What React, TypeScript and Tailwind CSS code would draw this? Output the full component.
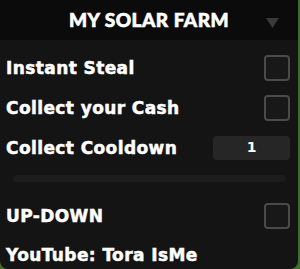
const titleFont = { fontFamily: '"Lato", "Noto Sans", sans-serif' };
const labelFont = { fontFamily: '"DejaVu Sans", "Noto Sans", sans-serif' };

const Checkbox = () => (
  <div className="w-[26px] h-[26px] rounded-[4px] border-2 border-[#4a4a4a] bg-[#181818]" />
);

const Row = ({ label, children }: { label: string; children?: React.ReactNode }) => (
  <div className="flex items-center justify-between pl-[6px] pr-[8px]">
    <span
      className="text-[17px] font-bold text-white tracking-[0.4px] [-webkit-text-stroke:0.5px_white] translate-y-[1px]"
      style={labelFont}
    >
      {label}
    </span>
    {children}
  </div>
);

export default function App() {
  return (
    <div className="w-[300px] h-[269px] bg-[#3f6b2c] flex" style={titleFont}>
      <div className="w-[298px] h-full bg-[#141414] rounded-b-[8px] overflow-hidden flex flex-col">
        <div className="h-[40px] shrink-0 bg-[#0b0b0b] flex items-center justify-center relative">
          <span className="text-[19px] font-black text-white uppercase tracking-[0.5px] [-webkit-text-stroke:0.6px_white]">
            My Solar Farm
          </span>
          <svg className="absolute left-[266px] top-[18px]" width="13" height="10" viewBox="0 0 13 10">
            <path d="M0 0 H13 L6.5 10 Z" fill="#3a3a3a" />
          </svg>
        </div>
        <div className="flex flex-col pt-[15px]">
          <Row label="Instant Steal">
            <Checkbox />
          </Row>
          <div className="h-[14px]" />
          <Row label="Collect your Cash">
            <Checkbox />
          </Row>
          <div className="h-[14px]" />
          <Row label="Collect Cooldown">
            <div
              className="w-[77px] h-[24px] rounded-[4px] bg-[#262626] flex items-center justify-center text-white text-[14px] font-bold"
              style={labelFont}
            >
              1
            </div>
          </Row>
          <div className="mx-[13px] mt-[14px] h-[7px] rounded-full bg-[#1c1c1c] w-[273px]" />
          <div className="h-[21px]" />
          <Row label="UP-DOWN">
            <Checkbox />
          </Row>
          <div
            className="pl-[6px] mt-[13px] text-[17px] font-bold text-white tracking-[0.4px] [-webkit-text-stroke:0.5px_white] translate-y-[1px]"
            style={labelFont}
          >
            YouTube: Tora IsMe
          </div>
        </div>
      </div>
    </div>
  );
}
